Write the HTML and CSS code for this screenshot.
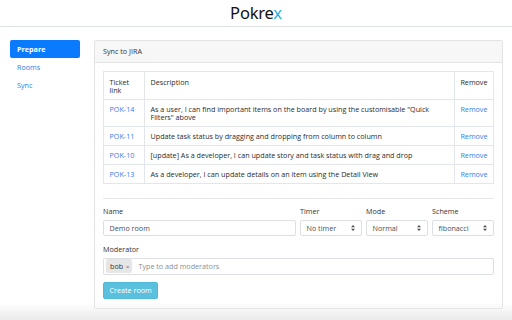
FILE: index.html
```html
<!DOCTYPE html>
<html>
<head>
<meta charset="utf-8">
<link rel="stylesheet" href="styles.css">
</head>
<body>
<header class="topbar">
  <span class="brand">Pokre<span class="brand-x">x</span></span>
</header>
<div class="layout">
  <nav class="sidebar">
    <a class="nav-link active">Prepare</a>
    <a class="nav-link">Rooms</a>
    <a class="nav-link">Sync</a>
  </nav>
  <section class="card">
    <div class="card-header">Sync to JIRA</div>
    <div class="card-body">
      <table class="tickets">
        <thead>
          <tr>
            <th class="col-ticket">Ticket link</th>
            <th>Description</th>
            <th class="col-remove">Remove</th>
          </tr>
        </thead>
        <tbody>
          <tr>
            <td><a class="link">POK-14</a></td>
            <td>As a user, I can find important items on the board by using the customisable "Quick Filters" above</td>
            <td><a class="link">Remove</a></td>
          </tr>
          <tr>
            <td><a class="link">POK-11</a></td>
            <td>Update task status by dragging and dropping from column to column</td>
            <td><a class="link">Remove</a></td>
          </tr>
          <tr>
            <td><a class="link">POK-10</a></td>
            <td>[update] As a developer, I can update story and task status with drag and drop</td>
            <td><a class="link">Remove</a></td>
          </tr>
          <tr>
            <td><a class="link">POK-13</a></td>
            <td>As a developer, I can update details on an item using the Detail View</td>
            <td><a class="link">Remove</a></td>
          </tr>
        </tbody>
      </table>
      <hr class="divider">
      <div class="form-row">
        <div class="field">
          <label class="label">Name</label>
          <div class="input">Demo room</div>
        </div>
        <div class="field">
          <label class="label">Timer</label>
          <div class="input select"><span>No timer</span><svg class="updown" viewBox="0 0 4 6" width="4" height="6"><path d="M2 0 L4 2.2 L0 2.2 Z M2 6 L4 3.8 L0 3.8 Z" fill="#495057"/></svg></div>
        </div>
        <div class="field">
          <label class="label">Mode</label>
          <div class="input select"><span>Normal</span><svg class="updown" viewBox="0 0 4 6" width="4" height="6"><path d="M2 0 L4 2.2 L0 2.2 Z M2 6 L4 3.8 L0 3.8 Z" fill="#495057"/></svg></div>
        </div>
        <div class="field">
          <label class="label">Scheme</label>
          <div class="input select"><span>fibonacci</span><svg class="updown" viewBox="0 0 4 6" width="4" height="6"><path d="M2 0 L4 2.2 L0 2.2 Z M2 6 L4 3.8 L0 3.8 Z" fill="#495057"/></svg></div>
        </div>
      </div>
      <div class="field moderator">
        <label class="label">Moderator</label>
        <div class="input tags">
          <span class="tag">bob <span class="tag-x">×</span></span>
          <span class="placeholder">Type to add moderators</span>
        </div>
      </div>
      <button class="btn-create">Create room</button>
    </div>
  </section>
</div>
<div class="bottom-fade"></div>
</body>
</html>
```
FILE: styles.css
```css
* { box-sizing: border-box; }
html, body { margin: 0; padding: 0; background: #fff; }
body {
  font-family: "Open Sans", "Liberation Sans", Arial, sans-serif;
  font-size: 7.2px;
  color: #212529;
  width: 512px;
  height: 320px;
  overflow: hidden;
}
.topbar {
  height: 27px;
  border-bottom: 1px solid #dfe2e6;
  display: flex;
  align-items: center;
  justify-content: center;
}
.brand {
  font-family: "Noto Sans", sans-serif;
  font-size: 16.5px;
  color: #111;
  letter-spacing: -0.2px;
  line-height: 1;
}
.brand-x { color: #1fb0e0; }
.layout {
  display: flex;
  gap: 14px;
  padding: 13px 9px 0 10px;
}
.sidebar {
  width: 70px;
  flex: none;
  display: flex;
  flex-direction: column;
}
.nav-link {
  display: block;
  padding: 4px 7px;
  line-height: 10px;
  color: #2f80ed;
  border-radius: 2px;
}
.nav-link.active {
  background: #0a7bff;
  color: #fff;
  font-weight: bold;
}
.card {
  flex: 1;
  border: 1px solid #e3e3e3;
  border-radius: 2px;
  height: 269px;
}
.card-header {
  height: 22px;
  line-height: 21px;
  padding: 0 8px;
  background: #f7f7f7;
  border-bottom: 1px solid #e3e3e3;
  color: #333;
}
.card-body { padding: 8px; }
.tickets {
  width: 100%;
  border-collapse: collapse;
  border: 1px solid #e3e6ea;
}
.tickets th, .tickets td {
  border: 1px solid #e3e6ea;
  padding: 5px 5.5px;
  line-height: 8px;
  text-align: left;
  vertical-align: top;
  font-weight: normal;
  color: #2b2b2b;
}
.tickets th { padding-top: 5.5px; }
.tickets .col-ticket { width: 41px; }
.tickets .col-remove { width: 37px; }
.link { color: #2f7ff0; }
.divider {
  border: 0;
  border-top: 1px solid #e8e8e8;
  margin: 14px 0 7px;
}
.form-row {
  display: grid;
  grid-template-columns: 193px 62px 62px 62px;
  gap: 4px;
}
.field { display: flex; flex-direction: column; }
.label {
  line-height: 10px;
  margin-bottom: 4px;
  color: #333;
}
.input {
  height: 16px;
  border: 1px solid #dcdfe3;
  border-radius: 2px;
  padding: 0 5.5px;
  display: flex;
  align-items: center;
  color: #495057;
}
.select { justify-content: space-between; }
.updown { flex: none; margin-right: 1px; }
.moderator { margin-top: 8px; }
.tags { height: 17px; padding: 0 2px; gap: 6px; }
.tag {
  background: #e6e6e6;
  border-radius: 2px;
  height: 14px;
  line-height: 14px;
  padding: 0 3px 0 4px;
  color: #333;
}
.tag-x { font-size: 6px; margin-left: 1px; color: #555; }
.placeholder { color: #8a8f96; }
.btn-create {
  margin-top: 7px;
  height: 17px;
  padding: 0 5.5px;
  font-family: inherit;
  font-size: 7.2px;
  color: #fff;
  background: #5bc0de;
  border: 1px solid #4fbad9;
  border-radius: 2px;
}
.bottom-fade {
  position: fixed;
  left: 0;
  right: 0;
  bottom: 0;
  height: 18px;
  background: linear-gradient(to bottom, rgba(236,236,236,0), #ebebeb);
}
```
